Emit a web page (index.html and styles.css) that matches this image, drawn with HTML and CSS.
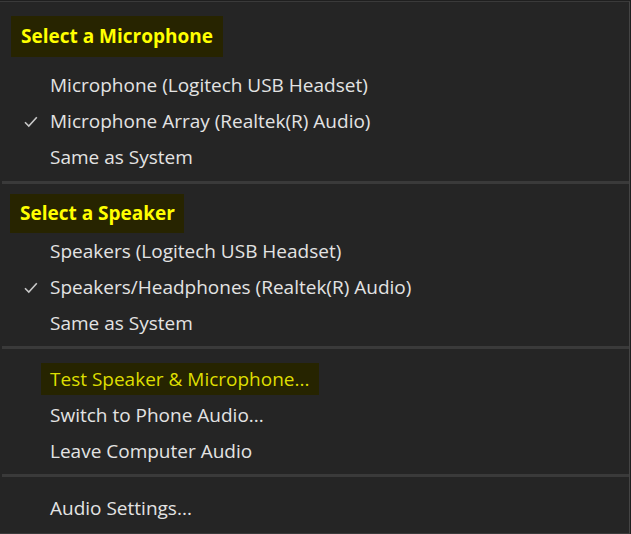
FILE: index.html
```html
<!DOCTYPE html>
<html lang="en">
<head>
<meta charset="utf-8">
<title>Audio menu</title>
<link rel="stylesheet" href="styles.css">
</head>
<body>
<div class="menu">
  <section class="group group-mic">
    <div class="group-title"><span class="title-text">Select a Microphone</span></div>
    <ul class="items">
      <li class="item"><span class="mark"></span><span class="label">Microphone (Logitech USB Headset)</span></li>
      <li class="item"><span class="mark"><svg class="check" width="14" height="12" viewBox="0 0 14 12"><path d="M1 6.2 L4.8 10 L12.8 1.2" fill="none" stroke="currentColor" stroke-width="1.6"/></svg></span><span class="label">Microphone Array (Realtek(R) Audio)</span></li>
      <li class="item"><span class="mark"></span><span class="label">Same as System</span></li>
    </ul>
  </section>
  <div class="divider"></div>
  <section class="group group-spk">
    <div class="group-title"><span class="title-text">Select a Speaker</span></div>
    <ul class="items">
      <li class="item"><span class="mark"></span><span class="label">Speakers (Logitech USB Headset)</span></li>
      <li class="item"><span class="mark"><svg class="check" width="14" height="12" viewBox="0 0 14 12"><path d="M1 6.2 L4.8 10 L12.8 1.2" fill="none" stroke="currentColor" stroke-width="1.6"/></svg></span><span class="label">Speakers/Headphones (Realtek(R) Audio)</span></li>
      <li class="item"><span class="mark"></span><span class="label">Same as System</span></li>
    </ul>
  </section>
  <div class="divider"></div>
  <section class="group group-actions">
    <ul class="items">
      <li class="item item-hover"><span class="mark mark-narrow"></span><span class="label label-hover">Test Speaker &amp; Microphone...</span></li>
      <li class="item"><span class="mark"></span><span class="label">Switch to Phone Audio...</span></li>
      <li class="item"><span class="mark"></span><span class="label">Leave Computer Audio</span></li>
    </ul>
  </section>
  <div class="divider"></div>
  <section class="group group-settings">
    <ul class="items">
      <li class="item"><span class="mark"></span><span class="label">Audio Settings...</span></li>
    </ul>
  </section>
</div>
</body>
</html>
```
FILE: styles.css
```css
html, body {
  margin: 0;
  padding: 0;
  background: #1f1f1f;
}

body {
  width: 631px;
  height: 534px;
  overflow: hidden;
  font-family: "Open Sans", "Noto Sans", sans-serif;
}

.menu {
  margin-top: 1px;
  width: 629px;
  height: 531px;
  background: #252525;
  border-top: 1px solid #3a3a3a;
  border-right: 1px solid #444444;
  border-bottom: 1px solid #3a3a3a;
  display: flex;
  flex-direction: column;
}

.group {
  display: flex;
  flex-direction: column;
}

.group-mic {
  padding-top: 14px;
  padding-bottom: 6px;
}

.group-spk {
  padding-top: 10px;
  padding-bottom: 5px;
}

.group-actions {
  padding-top: 12px;
  padding-bottom: 5px;
}

.group-settings {
  padding-top: 13px;
}

.group-title {
  display: flex;
  padding-left: 11px;
}

.title-text {
  background: #272400;
  color: #ffff00;
  font-weight: 700;
  font-size: 19px;
  padding: 0 10px;
  height: 41px;
  line-height: 41px;
}

.group-mic .items {
  margin-top: 10px;
}

.group-spk .title-text {
  height: 39px;
  line-height: 39px;
  padding: 0 9px 0 10px;
}

.group-spk .group-title {
  padding-left: 10px;
}

.items {
  list-style: none;
  margin: 0;
  padding: 0;
}

.item {
  display: flex;
  align-items: center;
  height: 36px;
  color: #e3e3e3;
  font-size: 19px;
  white-space: nowrap;
}

.mark {
  width: 50px;
  flex: none;
  display: flex;
  align-items: center;
  color: #c8c8c8;
}

.mark-narrow {
  width: 41px;
}

.check {
  margin-left: 24px;
  margin-top: 1px;
}

.label-hover {
  background: #262400;
  color: #dede00;
  height: 32px;
  line-height: 32px;
  padding: 0 10px 0 9px;
}

.divider {
  height: 3px;
  margin-left: 2px;
  background: #3a3a3a;
  flex: none;
}
```
